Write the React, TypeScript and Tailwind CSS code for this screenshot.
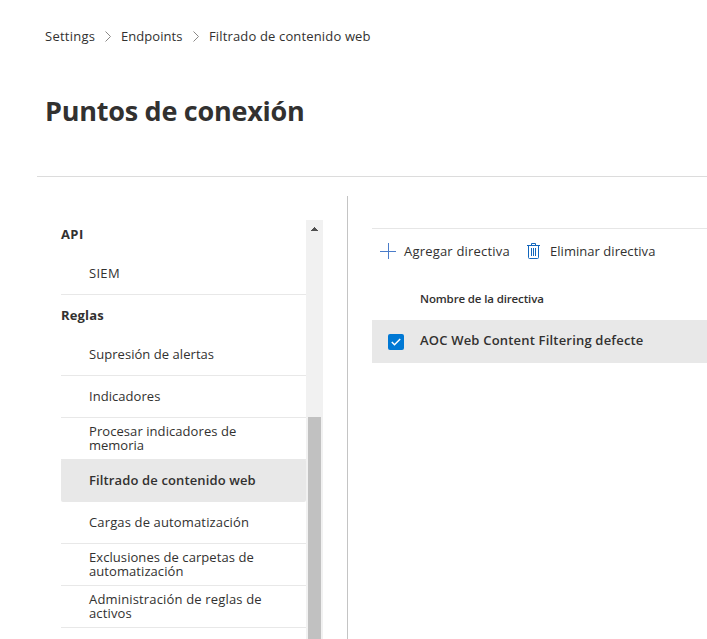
type Item = { lines: { text: string; cls: string }[]; active?: boolean };

const api: Item[] = [{ lines: [{ text: "SIEM", cls: "tracking-[0.3px]" }] }];

const rules: Item[] = [
  { lines: [{ text: "Supresión de alertas", cls: "tracking-[0.05px]" }] },
  { lines: [{ text: "Indicadores", cls: "tracking-[0.05px]" }] },
  {
    lines: [
      { text: "Procesar indicadores de", cls: "tracking-[0.07px]" },
      { text: "memoria", cls: "" },
    ],
  },
  { lines: [{ text: "Filtrado de contenido web", cls: "tracking-[0.13px]" }], active: true },
  { lines: [{ text: "Cargas de automatización", cls: "tracking-[0.14px]" }] },
  {
    lines: [
      { text: "Exclusiones de carpetas de", cls: "tracking-[0.07px]" },
      { text: "automatización", cls: "tracking-[0.07px]" },
    ],
  },
  {
    lines: [
      { text: "Administración de reglas de", cls: "tracking-[0.16px]" },
      { text: "activos", cls: "tracking-[0.15px]" },
    ],
  },
];

function NavItem({ item }: { item: Item }) {
  return (
    <li
      className={`flex flex-col justify-center pb-0.5 pl-7 leading-[14px] ${
        item.active
          ? "-mt-px h-[43px] rounded-xs bg-[#e8e8e8] font-semibold"
          : "h-[42px] border-b border-[#e8e8e8]"
      }`}
    >
      {item.lines.map((l) => (
        <span key={l.text} className={`w-fit whitespace-nowrap ${l.cls}`}>
          {l.text}
        </span>
      ))}
    </li>
  );
}

function Chevron() {
  return (
    <svg width="6" height="11" viewBox="0 0 6 11" fill="none" stroke="#8a8886">
      <path d="M.5.5 5.5 5.5.5 10.5" />
    </svg>
  );
}

export default function App() {
  return (
    <div className="flex h-[639px] w-[707px] flex-col overflow-hidden bg-white font-['Open_Sans','Noto_Sans',sans-serif] text-[13px] text-[#323130]">
      <header className="ml-[37px] h-[177px] shrink-0 border-b border-[#dcdcdc] pl-2">
        <nav className="mt-[27px] flex h-[19px] items-center whitespace-nowrap">
          <span className="w-[60px] tracking-[0.25px]">Settings</span>
          <Chevron />
          <span className="ml-[10px] w-[72px] tracking-[0.05px]">Endpoints</span>
          <Chevron />
          <span className="ml-[10px] tracking-[0.15px]">Filtrado de contenido web</span>
        </nav>
        <h1 className="mt-[45px] w-fit text-[27px] leading-10 font-bold tracking-[-0.25px] whitespace-nowrap">
          Puntos de conexión
        </h1>
      </header>
      <div className="flex min-h-0 flex-1">
        <aside className="mt-[19px] flex w-[348px] shrink-0 border-r border-[#c4c4c4] pt-6 pl-[61px]">
          <div className="w-[245px]">
            <h2 className="h-[33px] pt-1 leading-5 font-bold tracking-[0.4px]">API</h2>
            <ul>
              {api.map((item) => (
                <NavItem key={item.lines[0].text} item={item} />
              ))}
            </ul>
            <h2 className="flex h-[39px] items-center pt-0.5 font-bold tracking-[0.15px]">Reglas</h2>
            <ul>
              {rules.map((item) => (
                <NavItem key={item.lines[0].text} item={item} />
              ))}
            </ul>
          </div>
          <div className="flex w-[17px] flex-col items-center bg-[#f1f1f1] pt-[7px]">
            <svg width="7" height="4" viewBox="0 0 7 4" fill="#505050" shapeRendering="crispEdges">
              <path d="M3 0h1v1h1v1h1v1h1v1H0V3h1V2h1V1h1z" />
            </svg>
            <div className="mt-[186px] w-[13px] flex-1 bg-[#c1c1c1]" />
          </div>
        </aside>
        <main className="mt-[51px] ml-6 flex-1 border-t border-[#e6e6e6]">
          <div className="flex h-11 items-center whitespace-nowrap">
            <svg className="ml-2" width="16" height="16" viewBox="0 0 16 16" stroke="#4a7cc9" fill="none">
              <path d="M0 8.5h16M8.5 0v16" />
            </svg>
            <span className="ml-2 w-[123px] pt-0.5 tracking-[0.2px]">Agregar directiva</span>
            <svg width="13" height="16" viewBox="0 0 13 16" stroke="#1267bd" fill="none">
              <path d="M0 2.5h13M4.5 2.5v-2h4v2M1.5 2.5v12a1 1 0 0 0 1 1h8a1 1 0 0 0 1-1v-12M4.5 5v8M6.5 5v8M8.5 5v8" />
            </svg>
            <span className="ml-[10px] pt-0.5 tracking-[0.04px]">Eliminar directiva</span>
          </div>
          <div className="flex h-[47px] items-center pt-[5px] pl-12 text-[11.5px] font-semibold tracking-[-0.13px]">
            <span>Nombre de la directiva</span>
          </div>
          <div className="flex h-[43px] items-center bg-[#e8e8e8] pl-4 font-semibold">
            <div className="flex size-4 items-center justify-center rounded-xs bg-[#0078d4]">
              <svg width="10" height="8" viewBox="0 0 10 8" fill="none" stroke="white" strokeWidth="1.5">
                <path d="M.8 4 3.5 6.7 9.2 1" />
              </svg>
            </div>
            <span className="ml-4 pb-[2px] tracking-[0.19px]">AOC Web Content Filtering defecte</span>
          </div>
        </main>
      </div>
    </div>
  );
}
